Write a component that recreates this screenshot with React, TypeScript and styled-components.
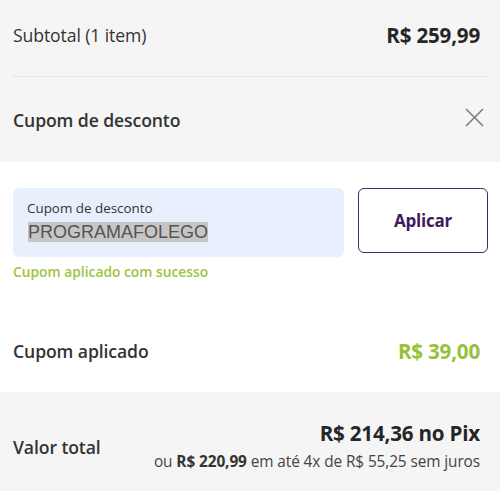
import React from "react";
import styled, { createGlobalStyle } from "styled-components";

const Global = createGlobalStyle`
  html, body { margin: 0; padding: 0; background: #ffffff; }
  body { font-family: "Open Sans", "Noto Sans", sans-serif; color: #333333; }
  * { box-sizing: border-box; }
`;

const Page = styled.div`
  width: 500px;
  display: flex;
  flex-direction: column;
`;

const GraySection = styled.section`
  background: #f5f5f5;
  padding: 0 12px 0 13px;
  display: flex;
  flex-direction: column;
`;

const WhiteSection = styled.section`
  background: #ffffff;
  padding: 26px 12px 0 13px;
  display: flex;
  flex-direction: column;
  height: 230px;
`;

const TotalSection = styled.section`
  background: #f5f5f5;
  padding: 28px 20px 0 13px;
  height: 99px;
  display: flex;
  align-items: flex-start;
  justify-content: space-between;
`;

const Row = styled.div<{ $top: number; $bottom: number; $divider?: boolean }>`
  display: flex;
  align-items: center;
  justify-content: space-between;
  padding-top: ${(p) => p.$top}px;
  padding-bottom: ${(p) => p.$bottom}px;
  padding-right: 8px;
  border-bottom: ${(p) => (p.$divider ? "1px solid #e4e4e4" : "none")};
`;

const Label = styled.span<{ $strong?: boolean }>`
  font-size: 17.6px;
  line-height: 24px;
  letter-spacing: -0.1px;
  font-weight: ${(p) => (p.$strong ? 600 : 500)};
  color: #333333;
`;

const Price = styled.span<{ $green?: boolean }>`
  font-size: 20.6px;
  line-height: 24px;
  font-weight: 700;
  letter-spacing: -0.2px;
  color: ${(p) => (p.$green ? "#98c13b" : "#262626")};
`;

const CloseButton = styled.button`
  border: none;
  background: transparent;
  padding: 0;
  width: 20px;
  height: 20px;
  display: flex;
  align-items: center;
  justify-content: center;
  cursor: pointer;
  margin-right: -4px;
  margin-top: -6px;
`;

const Form = styled.div`
  display: flex;
  align-items: flex-start;
  gap: 14px;
`;

const Field = styled.label`
  width: 331px;
  height: 69px;
  background: #e8f0fe;
  border-radius: 6px;
  padding: 11px 14px 0 14px;
  display: flex;
  flex-direction: column;
`;

const FieldLabel = styled.span`
  font-size: 13.4px;
  line-height: 18px;
  color: #333333;
`;

const FieldValue = styled.span`
  font-family: "Liberation Sans", Arial, sans-serif;
  font-size: 18px;
  line-height: 20px;
  color: #545454;
  margin-top: 5px;
  padding-left: 1px;
`;

const Selected = styled.span`
  background: #c6c6c6;
`;

const ApplyButton = styled.button`
  width: 130px;
  height: 65px;
  border: 1.5px solid #4b2768;
  border-radius: 6px;
  background: #ffffff;
  color: #3e1a5e;
  font-family: "Open Sans", "Noto Sans", sans-serif;
  font-size: 17px;
  font-weight: 700;
  letter-spacing: -0.2px;
  padding: 0;
  cursor: pointer;
`;

const Success = styled.span`
  margin-top: 6px;
  font-size: 13.8px;
  line-height: 18px;
  font-weight: 600;
  color: #9dc43e;
`;

const AppliedRow = styled.div`
  margin-top: 58px;
  padding-right: 8px;
  display: flex;
  align-items: center;
  justify-content: space-between;
`;

const TotalRight = styled.div`
  display: flex;
  flex-direction: column;
  align-items: flex-end;
`;

const PixPrice = styled.span`
  font-size: 20.6px;
  line-height: 26px;
  font-weight: 700;
  letter-spacing: -0.2px;
  color: #262626;
`;

const Installments = styled.span`
  font-size: 15.4px;
  line-height: 20px;
  color: #444444;
  margin-top: 6px;
  letter-spacing: -0.1px;
  b { font-weight: 700; color: #333333; }
`;

const TotalLabel = styled(Label)`
  margin-top: 15px;
`;

export default function App() {
  return (
    <Page>
      <Global />
      <GraySection>
        <Row $top={23} $bottom={29} $divider>
          <Label>Subtotal (1 item)</Label>
          <Price>R$ 259,99</Price>
        </Row>
        <Row $top={31} $bottom={30}>
          <Label $strong>Cupom de desconto</Label>
          <CloseButton aria-label="Fechar">
            <svg width="19" height="19" viewBox="0 0 19 19">
              <path d="M1 1 L18 18 M18 1 L1 18" stroke="#7a7a7a" strokeWidth="1.5" fill="none" />
            </svg>
          </CloseButton>
        </Row>
      </GraySection>
      <WhiteSection>
        <Form>
          <Field>
            <FieldLabel>Cupom de desconto</FieldLabel>
            <FieldValue>
              <Selected>PROGRAMAFOLEGO</Selected>
            </FieldValue>
          </Field>
          <ApplyButton>Aplicar</ApplyButton>
        </Form>
        <Success>Cupom aplicado com sucesso</Success>
        <AppliedRow>
          <Label $strong>Cupom aplicado</Label>
          <Price $green>R$ 39,00</Price>
        </AppliedRow>
      </WhiteSection>
      <TotalSection>
        <TotalLabel $strong>Valor total</TotalLabel>
        <TotalRight>
          <PixPrice>R$ 214,36 no Pix</PixPrice>
          <Installments>
            ou <b>R$ 220,99</b> em até 4x de R$ 55,25 sem juros
          </Installments>
        </TotalRight>
      </TotalSection>
    </Page>
  );
}
